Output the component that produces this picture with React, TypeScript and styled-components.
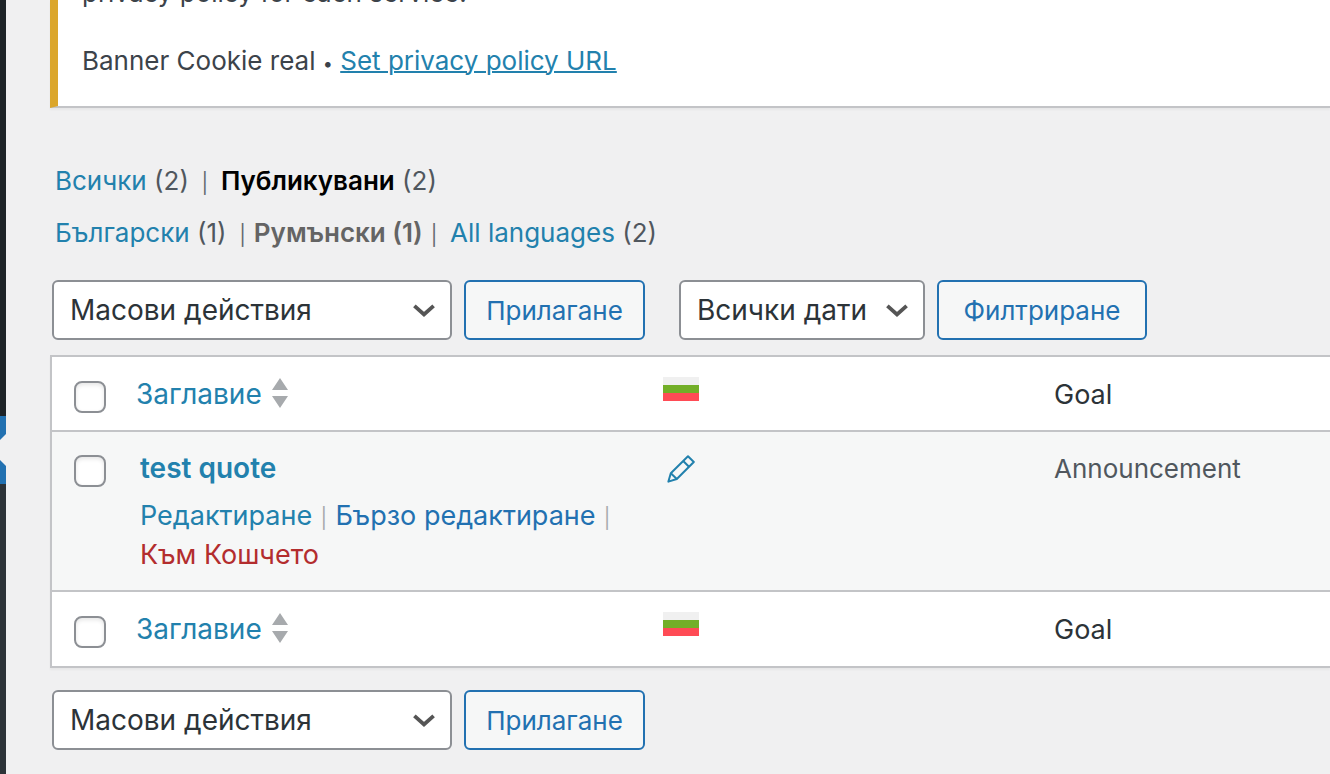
import React from "react";
import styled, { createGlobalStyle } from "styled-components";

const GlobalStyle = createGlobalStyle`
  *, *::before, *::after { box-sizing: border-box; }
  html { height: 100%; }
  body {
    margin: 0;
    background: #f0f0f1;
    color: #3c434a;
    font-family: Inter, "Noto Sans", "Liberation Sans", sans-serif;
    font-size: 26px;
    line-height: 39px;
  }
`;

const Page = styled.div`
  display: flex;
  min-height: 100vh;
  overflow: hidden;
`;

const Sidebar = styled.nav`
  flex: none;
  display: flex;
  flex-direction: column;
  width: 6px;
  background: #2c3338;
`;

const SidebarMenu = styled.div`
  height: 416px;
  background: #1d2327;
`;

const CurrentItem = styled.svg`
  display: block;
  width: 6px;
  height: 68px;
`;

const Content = styled.main`
  flex: 1;
  min-width: 0;
  padding: 0 0 24px 44px;
  overflow: hidden;
`;

const Notice = styled.section`
  display: flex;
  flex-direction: column;
  justify-content: flex-end;
  gap: 29px;
  height: 108px;
  padding: 0 24px 26px;
  overflow: hidden;
  background: #fff;
  border-left: 8px solid #dba62b;
  border-bottom: 2px solid #c3c4c7;
  box-shadow: 0 2px 2px rgba(0, 0, 0, 0.04);
`;

const NoticeText = styled.p`
  flex: none;
  margin: 0;
`;

const Bullet = styled.span`
  font-size: 18px;
  line-height: 1;
`;

const Link = styled.a<{ $tone?: "quick" | "danger"; $underline?: boolean }>`
  color: ${(p) => (p.$tone === "danger" ? "#b32d2e" : p.$tone === "quick" ? "#2271b1" : "#2281ad")};
  text-decoration: ${(p) => (p.$underline ? "underline" : "none")};
  text-decoration-thickness: 2px;
`;

const RowTitle = styled(Link)`
  font-size: 28px;
  font-weight: 600;
`;

const Filters = styled.div`
  display: flex;
  flex-direction: column;
  gap: 13px;
  padding: 53px 5px 0;
`;

const FilterList = styled.ul`
  display: flex;
  gap: 12px;
  margin: 0;
  padding: 0;
  list-style: none;
  color: #646970;
  white-space: nowrap;
`;

const Count = styled.span`
  color: #50575e;
`;

const Current = styled.strong<{ $muted?: boolean }>`
  color: ${(p) => (p.$muted ? "#646464" : "#000")};
  font-weight: 600;
`;

const Pipe = styled.span`
  display: inline-block;
  width: 8px;
  text-align: center;
  font-size: 20px;
  line-height: 1;
`;

const Toolbar = styled.form<{ $bottom?: boolean }>`
  display: flex;
  gap: 34px;
  padding: ${(p) => (p.$bottom ? "22px 2px 0" : "28px 2px 15px")};
`;

const ControlGroup = styled.div`
  display: flex;
  gap: 12px;
`;

const SelectBox = styled.div<{ $width: number }>`
  position: relative;
  width: ${(p) => p.$width}px;
  height: 60px;
`;

const Select = styled.select`
  appearance: none;
  width: 100%;
  height: 100%;
  padding: 0 40px 0 16px;
  border: 2px solid #8c8f94;
  border-radius: 6px;
  background: #fff;
  color: #2c3338;
  font: inherit;
  font-size: 28px;
`;

const Chevron = styled.svg`
  position: absolute;
  right: 17px;
  top: 24px;
  width: 22px;
  height: 14px;
  pointer-events: none;
`;

const Button = styled.button<{ $wide?: boolean }>`
  min-width: ${(p) => (p.$wide ? 210 : 181)}px;
  height: 60px;
  padding: 0 20px;
  border: 2px solid #2271b1;
  border-radius: 6px;
  background: #f6f7f7;
  color: #2271b1;
  font: inherit;
  white-space: nowrap;
`;

const Table = styled.table`
  width: 100%;
  table-layout: fixed;
  border-spacing: 0;
  border: 2px solid #c3c4c7;
  border-right: 0;
  background: #fff;
  box-shadow: 0 2px 2px rgba(0, 0, 0, 0.04);
`;

const Col = styled.col<{ $width?: number }>`
  width: ${(p) => (p.$width ? `${p.$width}px` : "auto")};
`;

const HeadCell = styled.th<{ $edge?: "top" | "bottom" }>`
  height: ${(p) => (p.$edge === "bottom" ? 75 : 76)}px;
  padding: 18px 16px 0;
  border-bottom: ${(p) => (p.$edge === "bottom" ? "2px solid #c3c4c7" : "0")};
  border-top: ${(p) => (p.$edge === "top" ? "2px solid #c3c4c7" : "0")};
  vertical-align: top;
  text-align: left;
  font-size: 27px;
  font-weight: 400;
  color: #2c3338;
`;

const Cell = styled.td`
  height: 158px;
  padding: 17px 20px 0;
  vertical-align: top;
  background: #f6f7f7;
  color: #50575e;

  &:last-child { padding-left: 16px; }
`;

const CheckCell = styled(Cell)`
  padding: 23px 22px 0;
`;

const CheckHead = styled(HeadCell)`
  padding: 24px 22px 0;
`;

const Checkbox = styled.input`
  appearance: none;
  display: block;
  width: 32px;
  height: 32px;
  margin: 0;
  border: 2px solid #8c8f94;
  border-radius: 8px;
  background: #fff;
  box-shadow: inset 0 2px 4px rgba(0, 0, 0, 0.1);
`;

const SortLink = styled(Link)`
  display: flex;
  align-items: center;
  gap: 10px;
  font-size: 28px;
`;

const SortIcon = styled.svg`
  width: 16px;
  height: 30px;
  margin-bottom: 4px;
`;

const Flag = styled.svg`
  display: block;
  width: 36px;
  height: 24px;
  margin-top: 2px;
`;

const Pencil = styled.svg`
  display: block;
  width: 28px;
  height: 28px;
  margin-top: 6px;
`;

const Actions = styled.div`
  padding-top: 8px;
  color: #a7aaad;
  font-size: 27px;
`;

function BulkSelect() {
  return (
    <ControlGroup>
      <SelectBox $width={400}>
        <Select aria-label="Масови действия">
          <option>Масови действия</option>
        </Select>
        <ChevronIcon />
      </SelectBox>
      <Button type="button">Прилагане</Button>
    </ControlGroup>
  );
}

function ChevronIcon() {
  return (
    <Chevron viewBox="0 0 22 14" aria-hidden="true">
      <path d="M1.4 1.8 11 10.4 20.6 1.8" fill="none" stroke="#555" strokeWidth="3.8" />
    </Chevron>
  );
}

function HeadingRow({ edge }: { edge: "top" | "bottom" }) {
  return (
    <tr>
      <CheckHead $edge={edge}>
        <Checkbox type="checkbox" aria-label="Избиране на всички" />
      </CheckHead>
      <HeadCell $edge={edge} scope="col">
        <SortLink href="#title">
          Заглавие
          <SortIcon viewBox="0 0 16 30" aria-hidden="true">
            <path d="M8 0 16 12H0zM0 18H16L8 30z" fill="#a7aaad" />
          </SortIcon>
        </SortLink>
      </HeadCell>
      <HeadCell $edge={edge} scope="col">
        <Flag viewBox="0 0 36 24" role="img" aria-label="Български">
          <path fill="#f0f0f0" d="M0 0h36v8H0z" />
          <path fill="#73af28" d="M0 8h36v8H0z" />
          <path fill="#ff4b55" d="M0 16h36v8H0z" />
        </Flag>
      </HeadCell>
      <HeadCell $edge={edge} scope="col">Goal</HeadCell>
    </tr>
  );
}

export default function App() {
  return (
    <Page lang="bg">
      <GlobalStyle />
      <Sidebar>
        <SidebarMenu />
        <CurrentItem viewBox="0 0 6 68" aria-hidden="true">
          <path fill="#2271b1" d="M0 0h6v68H0z" />
          <path fill="#f0f0f1" d="M6 18 0 24v20l6 6z" />
        </CurrentItem>
      </Sidebar>
      <Content>
        <Notice>
          <NoticeText>privacy policy for each service.</NoticeText>
          <NoticeText>
            Banner Cookie real <Bullet>•</Bullet>{" "}
            <Link href="#policy" $underline>Set privacy policy URL</Link>
          </NoticeText>
        </Notice>

        <Filters>
          <FilterList>
            <li><Link href="#all">Всички</Link> <Count>(2)</Count></li>
            <li><Pipe>|</Pipe></li>
            <li><Current>Публикувани</Current> <Count>(2)</Count></li>
          </FilterList>
          <FilterList>
            <li><Link href="#bg">Български</Link> <Count>(1)</Count></li>
            <li><Pipe>|</Pipe> <Current $muted>Румънски (1)</Current> <Pipe>|</Pipe></li>
            <li><Link href="#languages">All languages</Link> <Count>(2)</Count></li>
          </FilterList>
        </Filters>

        <Toolbar>
          <BulkSelect />
          <ControlGroup>
            <SelectBox $width={246}>
              <Select aria-label="Филтър по дата">
                <option>Всички дати</option>
              </Select>
              <ChevronIcon />
            </SelectBox>
            <Button type="button" $wide>Филтриране</Button>
          </ControlGroup>
        </Toolbar>

        <Table>
          <colgroup>
            <Col $width={68} />
            <Col $width={527} />
            <Col $width={391} />
            <Col />
          </colgroup>
          <thead>
            <HeadingRow edge="bottom" />
          </thead>
          <tbody>
            <tr>
              <CheckCell>
                <Checkbox type="checkbox" aria-label="test quote" />
              </CheckCell>
              <Cell>
                <RowTitle href="#post">test quote</RowTitle>
                <Actions>
                  <Link href="#edit">Редактиране</Link> <Pipe>|</Pipe>{" "}
                  <Link href="#quick" $tone="quick">Бързо редактиране</Link> <Pipe>|</Pipe>{" "}
                  <Link href="#trash" $tone="danger">Към Кошчето</Link>
                </Actions>
              </Cell>
              <Cell>
                <Link href="#translate" aria-label="Превод">
                  <Pencil viewBox="0 0 28 28" aria-hidden="true">
                    <g fill="none" stroke="#2281ad" strokeWidth="2" strokeLinejoin="round">
                      <path d="M21 1.2 26.8 7 9.8 24 1.4 26.6 3.8 18.2z" />
                      <path d="M16.2 6 22 11.8M3.8 18.2 9.8 24" />
                    </g>
                  </Pencil>
                </Link>
              </Cell>
              <Cell>Announcement</Cell>
            </tr>
          </tbody>
          <tfoot>
            <HeadingRow edge="top" />
          </tfoot>
        </Table>

        <Toolbar $bottom>
          <BulkSelect />
        </Toolbar>
      </Content>
    </Page>
  );
}
